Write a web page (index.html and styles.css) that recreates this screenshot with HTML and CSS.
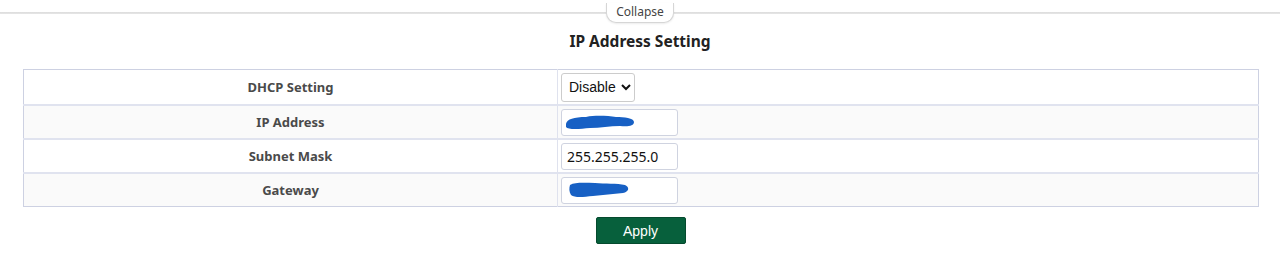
FILE: index.html
```html
<!DOCTYPE html>
<html lang="en">
<head>
  <meta charset="UTF-8" />
  <title>IP Address Setting</title>
  <link rel="stylesheet" href="styles.css">
</head>
<body>
  <div class="barra">
    <span class="recolher">Collapse</span>
  </div>
  <h2 class="titulo">IP Address Setting</h2>
  <table class="tabela">
    <tr>
      <td class="rotulo">DHCP Setting</td>
      <td class="valor">
        <select class="campo-select">
          <option>Disable</option>
          <option>Enable</option>
        </select>
      </td>
    </tr>
    <tr class="par">
      <td class="rotulo">IP Address</td>
      <td class="valor">
        <span class="caixa">
          <input class="campo" type="text" value="">
          <svg class="rabisco" width="72" height="16" viewBox="0 0 72 16">
            <path d="M2 10 C3 5 10 3 22 3 C32 1 44 2 52 3 C60 3 70 4 70 8 C70 12 64 13 56 12 C46 12 36 14 26 14 C16 15 4 16 2 13 Z" fill="#1760c4"/>
          </svg>
        </span>
      </td>
    </tr>
    <tr>
      <td class="rotulo">Subnet Mask</td>
      <td class="valor"><input class="campo" type="text" value="255.255.255.0"></td>
    </tr>
    <tr class="par">
      <td class="rotulo">Gateway</td>
      <td class="valor">
        <span class="caixa">
          <input class="campo" type="text" value="">
          <svg class="rabisco rabisco-2" width="64" height="18" viewBox="0 0 64 18">
            <path d="M3 4 C8 1 18 2 28 2 C38 3 50 2 58 4 C63 6 62 11 56 12 C46 13 36 14 26 15 C16 16 8 17 4 14 C2 11 2 7 3 4 Z" fill="#1760c4"/>
          </svg>
        </span>
      </td>
    </tr>
  </table>
  <div class="acoes">
    <button class="botao-aplicar">Apply</button>
  </div>
</body>
</html>
```

FILE: styles.css
```css
body {
  margin: 0;
  background: #fff;
  font-family: "Noto Sans", "Open Sans", sans-serif;
  color: #333;
}

.barra {
  height: 26px;
  display: flex;
  justify-content: center;
  align-items: flex-start;
  background: linear-gradient(#fff 12px, #dcdcdc 12px, #e6e6e6 14px, #fff 14px);
  padding-top: 3px;
  box-sizing: border-box;
}

.recolher {
  background: #fff;
  border: 1px solid #d6d6d6;
  border-top: none;
  border-radius: 0 0 10px 10px;
  box-shadow: 0 1px 2px rgba(0, 0, 0, 0.08);
  padding: 0 9px;
  height: 19px;
  line-height: 18px;
  font-size: 12px;
  color: #444;
}

.titulo {
  margin: 3px 0 0;
  height: 34px;
  line-height: 24px;
  text-align: center;
  font-size: 15.5px;
  font-weight: bold;
  color: #222;
}

.tabela {
  margin: 6px 22px 0 23px;
  width: 1236px;
  border-collapse: collapse;
  border: 1px solid #cdd1e2;
}

.tabela td {
  height: 32px;
  padding: 0;
  border-top: 2px solid #e0e3ef;
}

.tabela tr:first-child td {
  border-top: none;
  height: 34px;
}

.rotulo {
  width: 533px;
  text-align: center;
  font-size: 13px;
  font-weight: bold;
  color: #4a4a4a;
  border-right: 1px solid #dfe2ee;
}

.valor {
  padding-left: 3px !important;
}

.par td {
  background: #fafafa;
}

.campo-select {
  height: 29px;
  width: 74px;
  font-family: "Liberation Sans", Arial, sans-serif;
  font-size: 14px;
  color: #111;
  background: #fff;
  border: 1px solid #ccc;
  border-radius: 3px;
  padding: 0 0 0 3px;
}

.caixa {
  position: relative;
  display: inline-block;
  vertical-align: middle;
}

.campo {
  width: 117px;
  height: 27px;
  box-sizing: border-box;
  font-family: "Noto Sans", "Open Sans", sans-serif;
  font-size: 14px;
  color: #111;
  background: #fff;
  border: 1px solid #cfd3e0;
  border-radius: 3px;
  padding: 0 5px;
  vertical-align: middle;
}

.rabisco {
  position: absolute;
  left: 3px;
  top: 5px;
}

.rabisco-2 {
  left: 6px;
  top: 4px;
}

.acoes {
  display: flex;
  justify-content: center;
  padding-top: 10px;
}

.botao-aplicar {
  width: 90px;
  height: 27px;
  margin-left: 1px;
  background: #07603c;
  color: #fff;
  border: 1px solid #054a2e;
  border-radius: 2px;
  font-family: "Liberation Sans", Arial, sans-serif;
  font-size: 14px;
  cursor: pointer;
}
```
